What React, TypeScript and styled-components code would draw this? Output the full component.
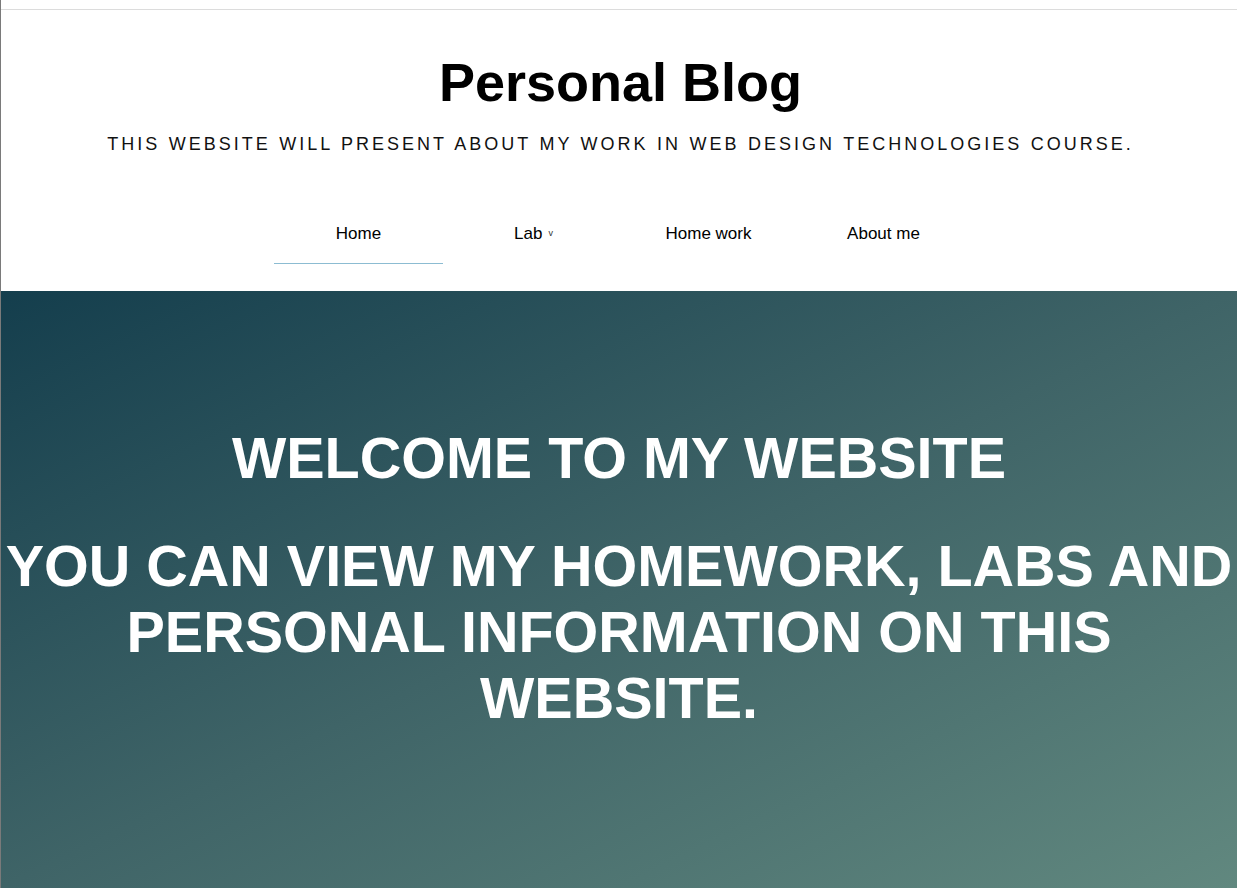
import React from "react";
import styled, { createGlobalStyle } from "styled-components";

const GlobalStyle = createGlobalStyle`
  html, body {
    margin: 0;
    padding: 0;
    background: #ffffff;
    font-family: "Liberation Sans", Arial, sans-serif;
    overflow: hidden;
  }
  * { box-sizing: border-box; }
`;

const Page = styled.div`
  border-left: 1px solid #7a7a7a;
  height: 888px;
  display: flex;
  flex-direction: column;
`;

const TopRule = styled.div`
  height: 10px;
  border-bottom: 1px solid #dcdcdc;
  flex: none;
`;

const Header = styled.header`
  display: flex;
  flex-direction: column;
  align-items: center;
  padding: 41px 0 27px 3px;
  flex: none;
`;

const Title = styled.h1`
  margin: 0;
  font-size: 54px;
  font-weight: 700;
  line-height: 62px;
  color: #000;
`;

const Subtitle = styled.p`
  margin: 21px 0 0;
  font-size: 18px;
  line-height: 21px;
  letter-spacing: 3px;
  word-spacing: 0.5px;
  color: #111;
  text-transform: uppercase;
`;

const Nav = styled.nav`
  margin-top: 69px;
  display: flex;
  justify-content: center;
  gap: 6px;
  padding-left: 1px;
`;

const NavItem = styled.a<{ $active?: boolean }>`
  width: 169px;
  text-align: center;
  font-size: 17px;
  line-height: 20px;
  color: #000;
  text-decoration: none;
  padding-bottom: 17px;
  border-bottom: 1px solid ${(p) => (p.$active ? "#8cbcd2" : "transparent")};
`;

const Caret = styled.span`
  font-size: 9px;
  margin-left: 6px;
  position: relative;
  top: -3px;
  color: #333;
`;

const Hero = styled.section`
  flex: 1;
  background: linear-gradient(to bottom right, #143e4d 0%, #3f6467 50%, #61887f 100%);
  color: #fff;
  text-align: center;
  padding-top: 134px;
`;

const HeroTitle = styled.h2`
  margin: 0;
  font-size: 57.5px;
  line-height: 66px;
  font-weight: 700;
  text-transform: uppercase;
`;

const HeroText = styled.h2`
  margin: 42px 0 0;
  font-size: 57.5px;
  line-height: 66px;
  font-weight: 700;
  text-transform: uppercase;
`;

export default function App() {
  return (
    <>
      <GlobalStyle />
      <Page>
        <TopRule />
        <Header>
          <Title>Personal Blog</Title>
          <Subtitle>This website will present about my work in web design technologies course.</Subtitle>
          <Nav>
            <NavItem $active href="#">Home</NavItem>
            <NavItem href="#">
              Lab<Caret>v</Caret>
            </NavItem>
            <NavItem href="#">Home work</NavItem>
            <NavItem href="#">About me</NavItem>
          </Nav>
        </Header>
        <Hero>
          <HeroTitle>Welcome to my website</HeroTitle>
          <HeroText>
            You can view my homework, labs and personal information on this website.
          </HeroText>
        </Hero>
      </Page>
    </>
  );
}
